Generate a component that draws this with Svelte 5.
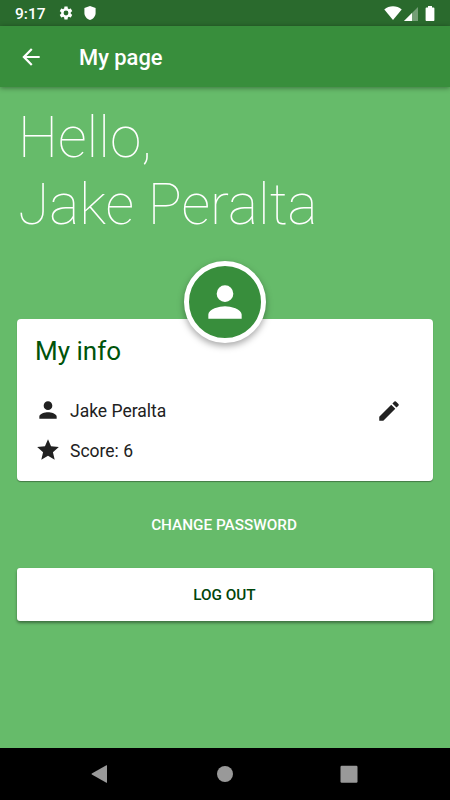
<script>
    let name = 'Jake Peralta';
    let score = 6;
</script>

<div class="screen">
    <div class="status">
        <span class="time">9:17</span>
        <svg class="gear" viewBox="0 0 24 24"><path d="M19.14 12.94c.04-.3.06-.61.06-.94s-.02-.64-.07-.94l2.03-1.58c.18-.14.23-.41.12-.61l-1.92-3.32c-.12-.22-.37-.29-.59-.22l-2.39.96c-.5-.38-1.03-.7-1.62-.94l-.36-2.54c-.04-.24-.24-.41-.48-.41h-3.84c-.24 0-.43.17-.47.41l-.36 2.54c-.59.24-1.13.57-1.62.94l-2.39-.96c-.22-.08-.47 0-.59.22L2.74 8.87c-.12.21-.08.47.12.61l2.03 1.58c-.05.3-.09.63-.09.94s.02.64.07.94l-2.03 1.58c-.18.14-.23.41-.12.61l1.92 3.32c.12.22.37.29.59.22l2.39-.96c.5.38 1.03.7 1.62.94l.36 2.54c.05.24.24.41.48.41h3.84c.24 0 .44-.17.47-.41l.36-2.54c.59-.24 1.13-.56 1.62-.94l2.39.96c.22.08.47 0 .59-.22l1.92-3.32c.12-.22.07-.47-.12-.61l-2.01-1.58zM12 15.600a3.600 3.600 0 1 1 0-7.200 3.600 3.600 0 0 1 0 7.200z"/></svg>
        <svg class="shield" viewBox="0 0 12 14"><path d="M6 0 11.600 2v5c0 3.200-2.300 5.900-5.600 7C2.700 12.900.4 10.200.4 7V2z"/></svg>
        <svg class="wifi" viewBox="0 0 18 14"><path d="M9 14 .3 3.500C2.800 1.300 5.700.2 9 .2s6.200 1.100 8.700 3.300z"/></svg>
        <svg class="signal" viewBox="0 0 14 14"><path opacity=".35" d="M14 0v14H0z"/><path d="M8 6v8H0z"/></svg>
        <svg class="battery" viewBox="0 0 10 15"><path d="M3 0h4v1.500h1.500c.6 0 .9.400.9.900v11.600c0 .6-.4 1-.9 1h-7c-.5 0-.9-.4-.9-1V2.400c0-.5.300-.9.900-.9H3z"/></svg>
    </div>

    <header>
        <svg class="icon" viewBox="0 0 24 24"><path d="M20 11H7.830l5.590-5.590L12 4l-8 8 8 8 1.410-1.410L7.830 13H20z"/></svg>
        <h1>My page</h1>
    </header>

    <main>
        <p class="hello">Hello,<br />{name}</p>

        <section class="card">
            <div class="avatar">
                <svg viewBox="0 0 24 24"><path d="M12 12a4 4 0 1 0 0-8 4 4 0 0 0 0 8zm0 2c-2.670 0-8 1.340-8 4v2h16v-2c0-2.660-5.330-4-8-4z"/></svg>
            </div>
            <h2>My info</h2>
            <div class="row">
                <svg class="icon" viewBox="0 0 24 24"><path d="M12 12a4 4 0 1 0 0-8 4 4 0 0 0 0 8zm0 2c-2.670 0-8 1.340-8 4v2h16v-2c0-2.660-5.330-4-8-4z"/></svg>
                <span>{name}</span>
                <svg class="icon edit" viewBox="0 0 24 24"><path d="M3 17.250V21h3.750L17.810 9.940l-3.750-3.750zM20.710 7.040a1 1 0 0 0 0-1.410l-2.340-2.340a1 1 0 0 0-1.410 0l-1.830 1.830 3.750 3.750z"/></svg>
            </div>
            <div class="row">
                <svg class="icon" viewBox="0 0 24 24"><path d="M12 17.270 18.180 21l-1.640-7.030L22 9.240l-7.190-.61L12 2 9.190 8.630 2 9.240l5.460 4.730L5.820 21z"/></svg>
                <span>Score: {score}</span>
            </div>
        </section>

        <button class="change">CHANGE PASSWORD</button>
        <button class="logout">LOG OUT</button>
    </main>

    <nav>
        <svg viewBox="0 0 20 20"><path d="M17 1.600v16.800q0 .6-.6.300L1.800 10.500q-.6-.5 0-.9L16.400 1.300q.6-.3.600.3z"/></svg>
        <svg viewBox="0 0 20 20"><circle cx="10" cy="10" r="8"/></svg>
        <svg viewBox="0 0 20 20"><rect x="1.500" y="1.700" width="17" height="17" rx="1.200"/></svg>
    </nav>
</div>

<style>
    :global(body){
        background: #66bb6a;
    }

    .screen{
        display: flex;
        flex-direction: column;
        width: 450px;
        height: 800px;
        overflow: hidden;
        box-sizing: border-box;
        background: #66bb6a;
        font-family: Roboto, sans-serif;
    }

    svg{
        display: block;
        flex: none;
        fill: currentColor;
    }

    .icon{
        width: 26px;
        height: 26px;
    }

    .status{
        display: flex;
        align-items: center;
        height: 26px;
        flex: none;
        box-sizing: border-box;
        padding: 0 15px;
        background: #2a6a2d;
        color: white;
    }

    .time{
        width: 42.5px;
        padding-top: 2px;
        font-size: 15.5px;
        font-weight: 500;
        line-height: 26px;
    }

    .gear{
        width: 16px;
        height: 16px;
        margin-right: 10px;
    }

    .shield{
        width: 12px;
        height: 14px;
    }

    .wifi{
        width: 18px;
        height: 14px;
        margin: 0 2px 0 auto;
    }

    .signal{
        width: 14px;
        height: 14px;
        margin: 1px 7px 0 0;
    }

    .battery{
        width: 10px;
        height: 15px;
    }

    header{
        display: flex;
        align-items: center;
        height: 61px;
        flex: none;
        box-sizing: border-box;
        padding: 0 18px;
        background: #388e3c;
        color: white;
        box-shadow: 0 1px 5px rgba(0, 0, 0, 0.4);
    }

    h1{
        margin: 2px 0 0 35px;
        font-size: 21.9px;
        font-weight: 500;
    }

    main{
        display: flex;
        flex-direction: column;
        flex: 1;
        padding: 17px 17px 0;
    }

    .hello{
        margin: 0 0 81px 1px;
        color: white;
        font-size: 56.8px;
        font-weight: 100;
        line-height: 67px;
    }

    .card{
        position: relative;
        height: 162px;
        box-sizing: border-box;
        padding: 14px 18px 0;
        border-radius: 4px;
        background: white;
        color: #212121;
        box-shadow: 0 1px 1px rgba(0, 0, 0, 0.35);
    }

    /* sits over the top edge of the card */
    .avatar{
        position: absolute;
        top: -58.5px;
        left: calc(50% - 41px);
        display: flex;
        align-items: center;
        justify-content: center;
        width: 82px;
        height: 82px;
        box-sizing: border-box;
        border: 5px solid white;
        border-radius: 50%;
        background: #388e3c;
        color: white;
        box-shadow: 0 3px 7px rgba(0, 0, 0, 0.35);
    }

    .avatar svg{
        width: 50px;
        height: 50px;
    }

    h2{
        margin: 0 0 27px;
        color: #00530a;
        font-size: 26px;
        font-weight: 400;
        line-height: 36px;
    }

    .row{
        display: flex;
        align-items: center;
        height: 28px;
        margin-bottom: 12px;
        font-size: 17.5px;
    }

    .row span{
        margin: 1px 0 0 9px;
    }

    .edit{
        margin: 1px 13px 0 auto;
    }

    button{
        border: none;
        border-radius: 3px;
        padding: 0;
        font-family: inherit;
        font-size: 15.3px;
        font-weight: 500;
    }

    .change{
        height: 52px;
        margin: 18px 2px 17px 0;
        background: transparent;
        color: white;
    }

    .logout{
        height: 53px;
        padding-right: 1px;
        background: white;
        color: #00450a;
        box-shadow: 0 2px 3px rgba(0, 0, 0, 0.4);
    }

    nav{
        display: flex;
        align-items: center;
        justify-content: space-between;
        height: 52px;
        flex: none;
        box-sizing: border-box;
        padding: 0 91px 0 90px;
        background: black;
        color: #999;
    }

    nav svg{
        width: 20px;
        height: 20px;
    }
</style>
